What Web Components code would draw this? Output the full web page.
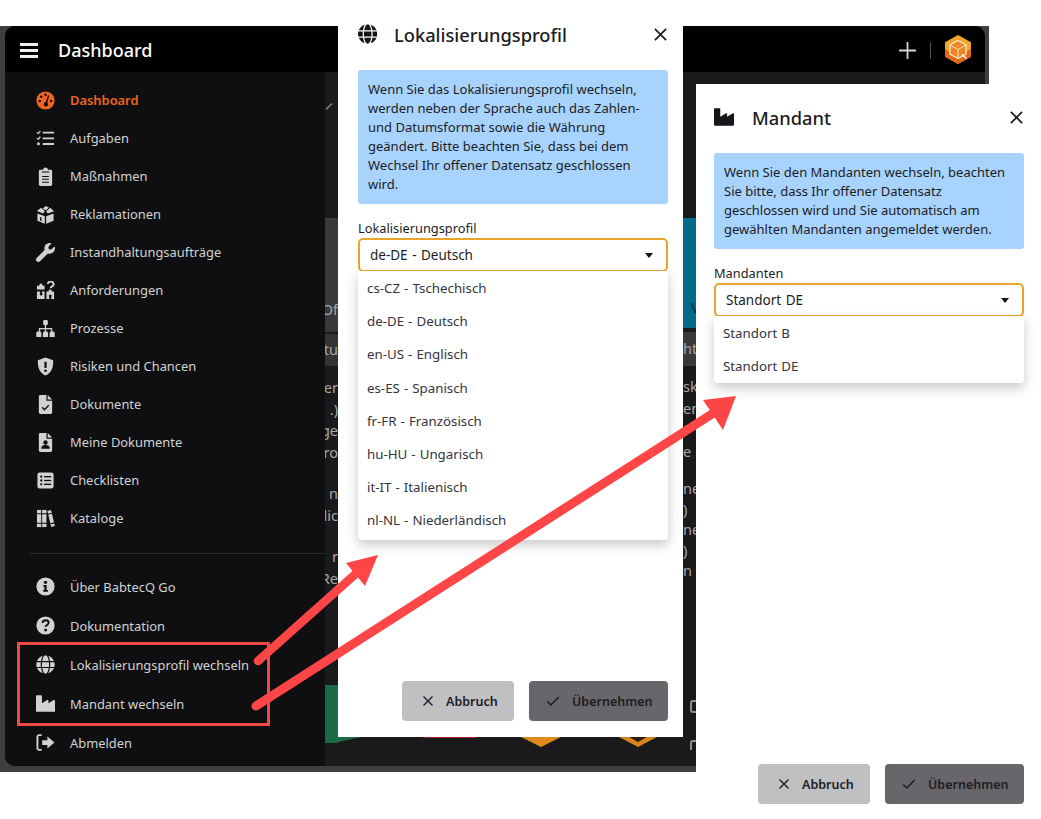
<!DOCTYPE html>
<html lang="de">
<head>
<meta charset="utf-8">
<title>Dashboard</title>
<style>
    html, body {
        margin: 0;
        background: #fff;
    }

    body {
        position: relative;
        width: 1041px;
        height: 819px;
        overflow: hidden;
        font-family: "Noto Sans", "Liberation Sans", sans-serif;
    }
</style>
</head>
<body>

<app-window title="Dashboard">
    <nav-item icon="gauge" label="Dashboard" active></nav-item>
    <nav-item icon="tasks" label="Aufgaben"></nav-item>
    <nav-item icon="clipboard" label="Maßnahmen"></nav-item>
    <nav-item icon="box" label="Reklamationen"></nav-item>
    <nav-item icon="wrench" label="Instandhaltungsaufträge"></nav-item>
    <nav-item icon="puzzle" label="Anforderungen"></nav-item>
    <nav-item icon="sitemap" label="Prozesse"></nav-item>
    <nav-item icon="shield" label="Risiken und Chancen"></nav-item>
    <nav-item icon="filecheck" label="Dokumente"></nav-item>
    <nav-item icon="fileuser" label="Meine Dokumente"></nav-item>
    <nav-item icon="checklist" label="Checklisten"></nav-item>
    <nav-item icon="books" label="Kataloge"></nav-item>
    <nav-item slot="lower" icon="info" label="Über BabtecQ Go"></nav-item>
    <nav-item slot="lower" icon="question" label="Dokumentation"></nav-item>
    <nav-item slot="lower" icon="globe" label="Lokalisierungsprofil wechseln"></nav-item>
    <nav-item slot="lower" icon="industry" label="Mandant wechseln"></nav-item>
    <nav-item slot="lower" icon="signout" label="Abmelden"></nav-item>
</app-window>

<select-dialog
    style="left:338px;top:1px;--pl:20px;--pr:15px;--title-gap:16px;--list-end:3px"
    heading="Lokalisierungsprofil"
    icon="globe"
    field="Lokalisierungsprofil"
    value="de-DE - Deutsch"
    options="cs-CZ - Tschechisch|de-DE - Deutsch|en-US - Englisch|es-ES - Spanisch|fr-FR - Französisch|hu-HU - Ungarisch|it-IT - Italienisch|nl-NL - Niederländisch">
    Wenn Sie das Lokalisierungsprofil wechseln, werden neben der Sprache auch das Zahlen- und Datumsformat sowie die Währung geändert. Bitte beachten Sie, dass bei dem Wechsel Ihr offener Datensatz geschlossen wird.
</select-dialog>

<select-dialog
    style="left:696px;top:84px;--pl:18px;--pr:17px;--title-gap:18px;--list-end:0px"
    heading="Mandant"
    icon="industry"
    field="Mandanten"
    value="Standort DE"
    options="Standort B|Standort DE">
    Wenn Sie den Mandanten wechseln, beachten Sie bitte, dass Ihr offener Datensatz geschlossen wird und Sie automatisch am gewählten Mandanten angemeldet werden.
</select-dialog>

<annotation-layer></annotation-layer>

<script>
// Icons are drawn with currentColor; --hole is the colour of the cut outs
const icons = {
    gauge: `<svg viewBox="0 0 20 20"><circle cx="10" cy="10" r="9.6" fill="currentColor"/>
        <g fill="var(--hole)"><circle cx="4" cy="10.5" r="1.3"/><circle cx="5.6" cy="6" r="1.3"/><circle cx="10" cy="3.9" r="1.3"/><circle cx="16" cy="10.5" r="1.3"/>
        <path d="M12.6 4.6l1.4.5-2.2 7.2a2.2 2.2 0 1 1-3.3 2.6 2.2 2.2 0 0 1 1.9-3.2z"/></g></svg>`,
    tasks: `<svg viewBox="0 0 20 20" fill="none" stroke="currentColor"><path d="M1 3.6l1.3 1.2L4.6 2M1 9.6l1.3 1.2L4.6 8" stroke-width="1.3"/><circle cx="2.6" cy="15.6" r="1.6" fill="currentColor" stroke="none"/><path d="M7 3.8h12M7 9.8h12M7 15.8h12" stroke-width="1.9"/></svg>`,
    clipboard: `<svg viewBox="0 0 20 20"><path fill="currentColor" d="M4.5 3h3a2.5 2.5 0 0 1 5 0h3A1.5 1.5 0 0 1 17 4.5v14a1.5 1.5 0 0 1-1.5 1.5h-11A1.5 1.5 0 0 1 3 18.500v-14A1.500 1.500 0 0 1 4.500 3z"/>
        <path d="M6 5.300h8M6.500 10h7M6.500 13h7M6.500 16h7" stroke="var(--hole)" stroke-width="1.100" fill="none"/></svg>`,
    box: `<svg viewBox="0 0 20 20"><path fill="currentColor" d="M10 1l3.600 1.300-2.800 3.200L7 4.200zM5.400 3l3.900 3.600-1.600 2.300L1 6.400zM15 3l4 3.500-6.700 2.500-1.500-2.400zM1.500 9l7.800 2.800v8L1.500 16.500zM18.500 9v7.500l-7.800 3.300v-8z"/><path d="M5 13v3.500" stroke="var(--hole)" stroke-width="1.500"/></svg>`,
    wrench: `<svg viewBox="0 0 512 512"><path fill="currentColor" d="M507.730 109.100c-2.240-9.030-13.540-12.090-20.120-5.510l-74.360 74.360-67.880-11.310-11.310-67.880 74.360-74.360c6.620-6.620 3.430-17.900-5.660-20.160-47.380-11.740-99.550.91-136.580 37.930-39.640 39.640-50.550 97.100-34.050 147.200L18.740 402.760c-24.990 24.990-24.990 65.510 0 90.500 24.990 24.990 65.510 24.990 90.500 0l213.210-213.210c50.120 16.710 107.470 5.680 147.370-34.220 37.070-37.070 49.700-89.320 37.910-136.730z"/></svg>`,
    puzzle: `<svg viewBox="0 0 20 20"><path fill="currentColor" d="M1 5h2.600a1.700 1.700 0 1 1 3.200 0H9v4H1zM1 11h3.400v1.500a1.500 1.500 0 1 0 2 0V11H9v8H1zM11 11h2.500a1.500 1.500 0 1 1 2.800 0H19v8h-3v-2a1.500 1.500 0 1 0-2 0v2h-3z"/><path d="M12.500 3.200a3 2.600 0 1 1 4.300 2.400c-1 .6-1.300 1-1.300 2" fill="none" stroke="currentColor" stroke-width="2"/></svg>`,
    sitemap: `<svg viewBox="0 0 20 20"><g fill="currentColor"><rect x="7.500" y="1" width="5" height="5.500" rx="1.500"/><path d="M9.300 6h1.400v3.500H17V13h-1.400v-2.200h-4.900V13H9.300v-2.200H4.400V13H3V9.500h6.300z"/><path d="M.3 19v-3.500a2.200 2.200 0 0 1 2.200-2.500h1a2.200 2.200 0 0 1 2.200 2.500V19zM7.300 19v-3.500a2.200 2.200 0 0 1 2.200-2.500h1a2.200 2.200 0 0 1 2.200 2.500V19zM14.300 19v-3.500a2.200 2.200 0 0 1 2.200-2.500h1a2.200 2.200 0 0 1 2.200 2.500V19z"/></g></svg>`,
    shield: `<svg viewBox="0 0 20 20"><path fill="currentColor" d="M10 .5l8 3c.6 7.500-2 13.500-8 16-6-2.500-8.600-8.500-8-16z"/><path d="M10 5v6.500" stroke="var(--hole)" stroke-width="2.300"/><circle cx="10" cy="14.500" r="1.400" fill="var(--hole)"/></svg>`,
    filecheck: `<svg viewBox="0 0 20 20"><path fill="currentColor" d="M4.500 0H11v6h6v12.500a1.500 1.500 0 0 1-1.500 1.500h-11A1.500 1.500 0 0 1 3 18.500v-17A1.500 1.500 0 0 1 4.500 0zM12.300 0L17 4.700h-4.700z"/><path d="M6.500 13l2.400 2.400 4.600-4.600" fill="none" stroke="var(--hole)" stroke-width="1.500"/></svg>`,
    fileuser: `<svg viewBox="0 0 20 20"><path fill="currentColor" d="M4.500 0H11v6h6v12.500a1.500 1.500 0 0 1-1.500 1.500h-11A1.500 1.500 0 0 1 3 18.500v-17A1.500 1.500 0 0 1 4.500 0zM12.300 0L17 4.700h-4.700z"/><circle cx="10" cy="10" r="2.300" fill="var(--hole)"/><path d="M5.500 16.500c0-3 1.800-3.800 4.500-3.800s4.500.8 4.500 3.800z" fill="var(--hole)"/></svg>`,
    checklist: `<svg viewBox="0 0 20 20"><rect x="1.500" y="1.500" width="17" height="17" rx="2.500" fill="currentColor"/><g fill="var(--hole)"><circle cx="5.500" cy="6" r="1.200"/><circle cx="5.500" cy="10" r="1.200"/><circle cx="5.500" cy="14" r="1.200"/><rect x="8.500" y="5.300" width="7.500" height="1.400"/><rect x="8.500" y="9.300" width="7.500" height="1.400"/><rect x="8.500" y="13.300" width="7.500" height="1.400"/></g></svg>`,
    books: `<svg viewBox="0 0 20 20"><g fill="currentColor"><rect x="1" y="1" width="4.500" height="18"/><rect x="6.500" y="1" width="4.500" height="18"/><path d="M12 2l3.800-1 4 17-3.800 1z"/></g><path d="M0 5h11.500M0 15h11.500M12.500 5.500l4-1M15.300 15.600l4-1" stroke="var(--hole)" stroke-width="1.200"/></svg>`,
    info: `<svg viewBox="0 0 20 20"><circle cx="10" cy="10" r="9.600" fill="currentColor"/><circle cx="10" cy="5.600" r="1.700" fill="var(--hole)"/><path d="M7.800 8.500h3.400v5.200h1.300v1.700H7.500v-1.700h1.300v-3.500h-1z" fill="var(--hole)"/></svg>`,
    question: `<svg viewBox="0 0 20 20"><circle cx="10" cy="10" r="9.600" fill="currentColor"/><path d="M6.800 7.300c.2-1.800 1.500-2.800 3.300-2.800s3.200 1 3.200 2.600c0 2.400-3.200 2.400-3.200 4.400" fill="none" stroke="var(--hole)" stroke-width="2"/><circle cx="10.100" cy="14.800" r="1.500" fill="var(--hole)"/></svg>`,
    globe: `<svg viewBox="0 0 496 512"><path fill="currentColor" d="M336.500 160C322 70.700 287.800 8 248 8s-74 62.700-88.500 152h177zM152 256c0 22.200 1.200 43.500 3.300 64h185.300c2.100-20.500 3.300-41.800 3.300-64s-1.200-43.500-3.300-64H155.300c-2.100 20.500-3.300 41.800-3.300 64zm324.700-96c-28.600-67.900-86.500-120.400-158-141.600 24.400 33.800 41.200 84.700 50 141.600h108zM177.200 18.400C105.800 39.600 47.800 92.100 19.300 160h108c8.700-56.900 25.500-107.800 49.900-141.600zM487.400 192H372.700c2.100 21 3.300 42.500 3.300 64s-1.200 43-3.300 64h114.600c5.500-20.500 8.600-41.800 8.600-64s-3.100-43.500-8.500-64zM120 256c0-21.500 1.200-43 3.300-64H8.600C3.200 212.500 0 233.800 0 256s3.200 43.500 8.600 64h114.600c-2-21-3.200-42.500-3.200-64zm39.500 96c14.500 89.300 48.700 152 88.500 152s74-62.700 88.500-152h-177zm159.300 141.600c71.400-21.200 129.400-73.700 158-141.600h-108c-8.800 56.900-25.600 107.800-50 141.600zM19.300 352c28.600 67.900 86.500 120.400 158 141.600-24.400-33.800-41.200-84.700-50-141.600h-108z"/></svg>`,
    industry: `<svg viewBox="0 0 512 512"><path fill="currentColor" d="M475.115 163.781L336 252.309v-68.280c0-18.916-20.931-30.399-36.885-20.248L160 252.309V56c0-13.255-10.745-24-24-24H24C10.745 32 0 42.745 0 56v400c0 13.255 10.745 24 24 24h464c13.255 0 24-10.745 24-24V184.029c0-18.917-20.931-30.399-36.885-20.248z"/></svg>`,
    signout: `<svg viewBox="0 0 20 20"><path d="M6 2.200H3.200A1.700 1.700 0 0 0 1.500 3.900v12.200a1.700 1.700 0 0 0 1.700 1.700H6" fill="none" stroke="currentColor" stroke-width="2"/><path fill="currentColor" d="M12 3.800l7.500 6.200-7.500 6.200V12.500H6.500v-5H12z"/></svg>`,
    close: `<svg viewBox="0 0 16 16"><path d="M2 2l12 12M14 2L2 14" fill="none" stroke="currentColor" stroke-width="1.800"/></svg>`,
    check: `<svg viewBox="0 0 16 16"><path d="M1.500 8.500l4 4 9-9" fill="none" stroke="currentColor" stroke-width="1.800"/></svg>`,
};

const navItemTemplate = document.createElement('template');
navItemTemplate.innerHTML = `
    <style>
        :host {
            display: flex;
            align-items: center;
            height: var(--row-height, 38px);
            padding-left: 31px;
            color: #d2d2d4;
            font-size: 12.900px;
            --hole: #0f0f11;
        }

        :host([active]) {
            color: #f0641e;
            font-weight: 600;
        }

        .icon {
            display: flex;
            width: 19px;
            height: 19px;
            margin-right: 15px;
        }

        .icon svg {
            width: 100%;
            height: 100%;
        }
    </style>
    <span class="icon"></span>
    <span class="label"></span>
`;

class NavItem extends HTMLElement {
    constructor() {
        super();
        this.attachShadow({ mode: 'open' });
        this.shadowRoot.appendChild(navItemTemplate.content.cloneNode(true));
    }

    connectedCallback() {
        this.shadowRoot.querySelector('.icon').innerHTML = icons[this.getAttribute('icon')];
        this.shadowRoot.querySelector('.label').textContent = this.getAttribute('label');
    }
}

customElements.define('nav-item', NavItem);

const appWindowTemplate = document.createElement('template');
appWindowTemplate.innerHTML = `
    <style>
        :host {
            position: absolute;
            left: 0;
            top: 26px;
            width: 989px;
            height: 746px;
            box-sizing: border-box;
            padding: 0 4px 6px 5px;
            background: #3e3e40;
        }

        .frame {
            display: flex;
            flex-flow: column nowrap;
            height: 100%;
            border-radius: 10px;
            overflow: hidden;
            background: #1a1a1c;
        }

        header {
            display: flex;
            align-items: center;
            flex: none;
            box-sizing: border-box;
            height: 46px;
            padding-top: 2px;
            background: #000;
            color: #fff;
        }

        .burger {
            width: 18px;
            height: 15px;
            margin: 0 20px 0 15px;
            background: linear-gradient(#eee 3px, transparent 3px 6px, #eee 6px 9px, transparent 9px 12px, #eee 12px);
        }

        h1 {
            flex: auto;
            margin: 0;
            font-size: 18px;
            font-weight: 500;
        }

        .plus {
            display: flex;
            width: 17px;
            height: 17px;
            color: #d8d4cc;
        }

        .bar {
            width: 1px;
            height: 17px;
            margin: 0 14px 0 14px;
            background: #55504a;
        }

        .logo {
            display: flex;
            width: 26px;
            height: 29px;
            margin: -2px 14px 0 0;
        }

        .body {
            display: flex;
            flex: auto;
            min-height: 0;
        }

        nav {
            flex: none;
            box-sizing: border-box;
            width: 320px;
            padding-top: 9px;
            background: #0f0f11;
        }

        .divider {
            height: 1px;
            margin: 16px 0 13px 25px;
            background: #2b2b2d;
        }

        .lower {
            --row-height: 39px;
        }

        .strip {
            display: flex;
            flex-flow: column nowrap;
            flex: none;
            width: 13px;
            overflow: hidden;
            color: #a8a8aa;
            font-size: 14.500px;
            line-height: 21.500px;
            white-space: nowrap;
        }

        .strip div {
            display: flex;
            flex: none;
        }

        .strip.left div {
            justify-content: flex-end;
        }

        .strip.right {
            padding-bottom: 16px;
            box-sizing: border-box;
        }

        .strip .tight {
            line-height: 20.500px;
        }

        .tick {
            align-items: flex-start;
            justify-content: flex-start !important;
            height: 146px;
        }

        .tick svg {
            margin-top: 31px;
        }

        .head-box {
            align-items: flex-end;
            background: #39393b;
        }

        .under {
            display: flex;
            flex-flow: column nowrap;
            justify-content: flex-end;
            flex: none;
            width: 345px;
            padding-bottom: 16px;
        }

        .under svg {
            display: block;
            width: 345px;
            height: 13px;
        }

        .outline {
            box-sizing: border-box;
            width: 6px;
            margin-left: 7px;
            border: 2px solid #8c8c8e;
            border-right: 0;
        }
    </style>
    <div class="frame">
        <header>
            <div class="burger"></div>
            <h1></h1>
            <span class="plus"><svg viewBox="0 0 17 17" width="17" height="17"><path d="M8.500 0v17M0 8.500h17" stroke="currentColor" stroke-width="1.800"/></svg></span>
            <span class="bar"></span>
            <span class="logo">
                <svg viewBox="0 0 26 29" width="26" height="29">
                    <path d="M13 0l13 7.300v14.400L13 29 0 21.700V7.300z" fill="#f4a52c"/>
                    <path d="M0 14v7.700L13 29l13-7.300V14l-13 7.500z" fill="#e2661c"/>
                    <path d="M13 5.500l8 4.500v9l-8 4.500-8-4.500v-9z" fill="#ee8526" stroke="#fde9b8" stroke-width="1.400"/>
                    <path d="M5 10l8 4.500V23.500M13 14.500l8-4.500" fill="#f4b04a" fill-opacity="0" stroke="#fde9b8" stroke-width="1"/>
                    <path d="M17 19.500l4.500 4" stroke="#fff" stroke-width="1.500"/>
                </svg>
            </span>
        </header>
        <div class="body">
            <nav>
                <slot></slot>
                <div class="divider"></div>
                <div class="lower"><slot name="lower"></slot></div>
            </nav>
            <div class="strip left">
                <div class="tick"><svg width="8" height="7" viewBox="0 0 8 7"><path d="M1 6.500L7 .5" stroke="#8a8a8c" stroke-width="1.400"/></svg></div>
                <div class="head-box" style="height:114px;padding-bottom:12px;box-sizing:border-box">Of</div>
                <div style="height:2px"></div>
                <div style="height:32px;align-items:center;background:#343435">rtu</div>
                <div style="height:11px"></div>
                <div>er</div>
                <div>.)</div>
                <div>ge</div>
                <div>Pro</div>
                <div style="height:20px"></div>
                <div>n</div>
                <div>alic</div>
                <div style="height:20px"></div>
                <div>r</div>
                <div>Re</div>
                <div style="height:96px"></div>
                <div style="height:58px;background:#1c6a48"></div>
            </div>
            <div class="under">
                <svg viewBox="0 0 345 13">
                    <path d="M0 0h24l-24 5z" fill="#1c6a48"/>
                    <rect x="85" y="0" width="53" height="1" fill="#b01c2c"/>
                    <path d="M183 0h40l-20 10z" fill="#e08a1c"/>
                    <path d="M281 0h38l-19 10z" fill="#d8841c"/>
                    <path d="M291 0h18l-9 5z" fill="#2a1a10"/>
                </svg>
            </div>
            <div class="strip right">
                <div style="height:146px"></div>
                <div style="height:110px;padding:0 0 10px 8px;box-sizing:border-box;align-items:flex-end;background:#006a8a;color:#07283a">V</div>
                <div style="height:4px"></div>
                <div style="height:34px;align-items:center;background:#39393b">ht</div>
                <div style="height:10px"></div>
                <div>sk</div>
                <div>en</div>
                <div>&nbsp;</div>
                <div>e</div>
                <div style="height:16px"></div>
                <div class="tight">ne</div>
                <div class="tight">)</div>
                <div class="tight">ne</div>
                <div class="tight">)</div>
                <div class="tight">n (i</div>
                <div class="outline" style="height:13px;margin-top:auto;border-radius:3px 0 0 3px"></div>
                <div class="outline" style="height:10px;margin-top:27px;border-bottom:0;border-radius:3px 0 0 0"></div>
            </div>
        </div>
    </div>
`;

class AppWindow extends HTMLElement {
    constructor() {
        super();
        this.attachShadow({ mode: 'open' });
        this.shadowRoot.appendChild(appWindowTemplate.content.cloneNode(true));
    }

    connectedCallback() {
        this.shadowRoot.querySelector('h1').textContent = this.getAttribute('title');
    }
}

customElements.define('app-window', AppWindow);

const dialogTemplate = document.createElement('template');
dialogTemplate.innerHTML = `
    <style>
        :host {
            position: absolute;
            display: flex;
            flex-flow: column nowrap;
            box-sizing: border-box;
            width: 345px;
            height: 736px;
            padding: 0 var(--pr) 16px var(--pl);
            background: #fff;
            color: #1c1c24;
            font-size: 13px;
        }

        header {
            display: flex;
            align-items: center;
            flex: none;
            height: 66px;
            padding-bottom: 3px;
        }

        .title-icon {
            display: flex;
            width: 20px;
            height: 20px;
            margin-right: var(--title-gap);
            color: #15151a;
        }

        h2 {
            flex: auto;
            margin: 0;
            font-size: 18.300px;
            font-weight: 500;
        }

        .close {
            display: flex;
            width: 15px;
            height: 15px;
        }

        .info {
            padding: 10px;
            border-radius: 3px;
            background: #a8d3fd;
            line-height: 19px;
        }

        .field-label {
            margin-top: 14px;
            font-size: 12.800px;
            line-height: 20px;
        }

        .select {
            position: relative;
            display: flex;
            align-items: center;
            box-sizing: border-box;
            height: 34px;
            padding: 0 13px 0 10px;
            border: 2px solid #e8a52a;
            border-radius: 5px;
            font-size: 13.500px;
            word-spacing: 1px;
        }

        .select span {
            flex: auto;
        }

        .select i {
            width: 0;
            height: 0;
            border: 4.500px solid transparent;
            border-top: 5px solid #15151a;
            border-bottom: 0;
        }

        .options {
            position: absolute;
            left: -2px;
            right: -2px;
            top: 31.400px;
            padding-bottom: var(--list-end);
            border-radius: 0 0 4px 4px;
            background: #fff;
            box-shadow: 0 5px 12px rgba(60, 60, 70, 0.28);
            color: #34343e;
            font-size: 13.300px;
            word-spacing: 0.600px;
        }

        .options div {
            display: flex;
            align-items: center;
            height: 33.200px;
            padding-left: 9px;
        }

        footer {
            display: flex;
            justify-content: flex-end;
            gap: 15px;
            flex: none;
            margin-top: auto;
        }

        button {
            display: flex;
            align-items: center;
            box-sizing: border-box;
            height: 40px;
            border: 0;
            border-radius: 4px;
            color: #1c1c22;
            font: inherit;
            font-size: 12.500px;
            font-weight: 600;
        }

        .cancel {
            width: 112px;
            padding: 0 0 0 20px;
            background: #c0bfc2;
        }

        .cancel svg {
            width: 12px;
            height: 12px;
            margin-right: 12px;
        }

        .apply {
            width: 139px;
            padding: 0 0 0 17px;
            background: #68666b;
        }

        .apply svg {
            width: 14px;
            height: 14px;
            margin-right: 12px;
        }
    </style>
    <header>
        <span class="title-icon"></span>
        <h2></h2>
        <span class="close"></span>
    </header>
    <div class="info"><slot></slot></div>
    <div class="field-label"></div>
    <div class="select">
        <span class="value"></span>
        <i></i>
        <div class="options"></div>
    </div>
    <footer>
        <button class="cancel" type="button"><span class="ico-close"></span>Abbruch</button>
        <button class="apply" type="button"><span class="ico-check"></span>Übernehmen</button>
    </footer>
`;

class SelectDialog extends HTMLElement {
    constructor() {
        super();
        this.attachShadow({ mode: 'open' });
        this.shadowRoot.appendChild(dialogTemplate.content.cloneNode(true));
    }

    connectedCallback() {
        const root = this.shadowRoot;
        root.querySelector('.title-icon').innerHTML = icons[this.getAttribute('icon')];
        root.querySelector('h2').textContent = this.getAttribute('heading');
        root.querySelector('.close').innerHTML = icons.close;
        root.querySelector('.field-label').textContent = this.getAttribute('field');
        root.querySelector('.value').textContent = this.getAttribute('value');
        root.querySelector('.ico-close').outerHTML = icons.close;
        root.querySelector('.ico-check').outerHTML = icons.check;

        const list = root.querySelector('.options');
        this.getAttribute('options').split('|').forEach((text) => {
            const row = document.createElement('div');
            row.textContent = text;
            list.appendChild(row);
        });
    }
}

customElements.define('select-dialog', SelectDialog);

const annotationTemplate = document.createElement('template');
annotationTemplate.innerHTML = `
    <style>
        :host {
            position: absolute;
            inset: 0;
            display: block;
            pointer-events: none;
        }

        svg {
            display: block;
        }
    </style>
    <svg width="1041" height="819" viewBox="0 0 1041 819">
        <rect x="18.500" y="643.500" width="250" height="81" fill="none" stroke="#ef4a4a" stroke-width="3"/>
        <path d="M258 661L360 570" stroke="#ff4646" stroke-width="8.500" stroke-linecap="round" fill="none"/>
        <path d="M378 555L346 563 365 586z" fill="#ff4646"/>
        <path d="M256 706L712 414" stroke="#ff4646" stroke-width="9" stroke-linecap="round" fill="none"/>
        <path d="M736 396L703 400 723 430z" fill="#ff4646"/>
    </svg>
`;

class AnnotationLayer extends HTMLElement {
    constructor() {
        super();
        this.attachShadow({ mode: 'open' });
        this.shadowRoot.appendChild(annotationTemplate.content.cloneNode(true));
    }
}

customElements.define('annotation-layer', AnnotationLayer);
</script>
</body>
</html>
